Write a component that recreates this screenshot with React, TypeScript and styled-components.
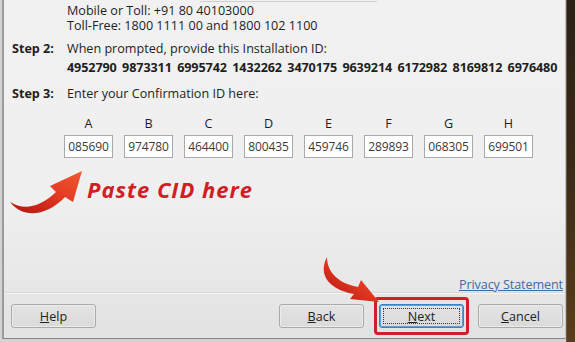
import * as React from "react";
import styled, { createGlobalStyle } from "styled-components";

const GlobalStyle = createGlobalStyle`
    html, body {
        margin: 0;
        padding: 0;
        background: #cfcfcf;
    }
    body {
        font-family: "Open Sans", "Noto Sans", sans-serif;
        font-size: 12.6px;
        color: #1e1e1e;
    }
`;

const Page = styled.div`
    display: flex;
    width: 575px;
    height: 342px;
    overflow: hidden;
    background: #d2d2d2;
`;

const Dialog = styled.div`
    position: relative;
    margin-left: 2px;
    width: 561px;
    height: 338px;
    border-left: 2px solid #9b9b9b;
    border-right: 1px solid #c4c4c4;
    border-bottom: 1px solid #858585;
    background: linear-gradient(180deg, #f1f1f1 0%, #efefef 60%, #e2e2e2 100%);
    display: flex;
    flex-direction: column;
`;

const RightEdge = styled.div`
    flex: 1;
    background: linear-gradient(180deg, #2b2016 0%, #3c2a18 50%, #5a3d1c 100%);
    border-left: 1px solid #6d5a44;
`;

const StubLine = styled.div`
    margin-left: 196px;
    width: 177px;
    height: 1px;
    border-bottom: 1px solid #cfcfcf;
`;

const Section = styled.div<{ $top: number }>`
    display: grid;
    grid-template-columns: 55px 1fr;
    padding-left: 8px;
    margin-top: ${({ $top }) => $top}px;
    line-height: 15px;
`;

const StepLabel = styled.div`
    font-weight: 700;
`;

const Text = styled.div<{ $bold?: boolean }>`
    font-weight: ${({ $bold }) => ($bold ? 700 : 400)};
    white-space: nowrap;
`;

const Numbers = styled(Text)`
    margin-top: 4px;
    word-spacing: 2.2px;
    letter-spacing: -0.1px;
`;

const CidGrid = styled.div`
    display: flex;
    gap: 11px;
    margin-top: 15px;
    padding-left: 60px;
`;

const CidColumn = styled.div`
    display: flex;
    flex-direction: column;
    align-items: center;
    width: 49px;
`;

const CidLetter = styled.div`
    line-height: 15px;
    margin-bottom: 4px;
`;

const CidBox = styled.div`
    box-sizing: border-box;
    width: 49px;
    height: 23px;
    border: 1px solid #a9a9a9;
    background: #ffffff;
    color: #3a3a3a;
    font-size: 12px;
    display: flex;
    align-items: center;
    justify-content: center;
    letter-spacing: -0.1px;
`;

const PasteRow = styled.div`
    display: flex;
    align-items: center;
    margin-top: 7px;
    padding-left: 2px;
`;

const PasteText = styled.div`
    font-size: 22px;
    font-weight: 700;
    font-style: italic;
    color: #d01e24;
    margin-left: 1px;
    margin-top: -4px;
    letter-spacing: 1px;
`;

const PrivacyRow = styled.div`
    margin-top: auto;
    display: flex;
    justify-content: flex-end;
    padding-right: 2px;
    line-height: 15px;
`;

const Link = styled.a`
    color: #3b6ca6;
    text-decoration: underline;
    letter-spacing: -0.1px;
    cursor: pointer;
`;

const Separator = styled.div`
    height: 1px;
    background: #d6d6d6;
    border-bottom: 1px solid #f6f6f6;
`;

const Footer = styled.div`
    display: flex;
    align-items: center;
    height: 44px;
    padding: 0 2px 0 7px;
`;

const Spacer = styled.div`
    flex: 1;
`;

const Button = styled.button<{ $focused?: boolean }>`
    box-sizing: border-box;
    width: 85px;
    height: 24px;
    padding: 0;
    font-family: inherit;
    font-size: 12.6px;
    color: #222;
    border-radius: 3px;
    border: 1px solid ${({ $focused }) => ($focused ? "#3b82c4" : "#aaaaaa")};
    background: linear-gradient(180deg, #e3e3e3 0%, #dadada 100%);
    box-shadow: ${({ $focused }) => ($focused ? "inset 0 0 0 1px #5aa0dc" : "inset 0 0 0 1px #ececec")};
    position: relative;
    cursor: pointer;

    u {
        text-decoration: underline;
    }
`;

const FocusRing = styled.span`
    position: absolute;
    inset: 3px;
    border: 1px dotted #3a3a3a;
`;

const Highlight = styled.div`
    box-sizing: border-box;
    margin: 0 9px 0 10px;
    padding: 4px 2px;
    border: 3px solid #cf2027;
    border-radius: 4px;
`;

const OverlayArrow = styled.svg`
    position: absolute;
    left: 308px;
    top: 252px;
    overflow: visible;
`;

const ArrowGradient = ({ id }: { id: string }) => (
    <defs>
        <linearGradient id={id} x1="0" y1="1" x2="1" y2="0">
            <stop offset="0%" stopColor="#b3120f" />
            <stop offset="55%" stopColor="#e33a22" />
            <stop offset="100%" stopColor="#f25a33" />
        </linearGradient>
    </defs>
);

const UpArrow = () => (
    <svg width="80" height="52" viewBox="0 0 80 52">
        <ArrowGradient id="g1" />
        <path
            d="M 4 37 C 18 46, 34 42, 50 27 L 44 21 L 76 6 L 67 37 L 59 32 C 42 50, 18 55, 4 37 Z"
            fill="url(#g1)"
        />
    </svg>
);

const DownArrow = () => (
    <OverlayArrow width="70" height="55" viewBox="0 0 70 55">
        <ArrowGradient id="g2" />
        <path
            d="M 15 5 C 15 22, 29 32, 46 35 L 49 28 L 67 50 L 38 47 L 42 42 C 19 38, 5 24, 15 5 Z"
            fill="url(#g2)"
        />
    </OverlayArrow>
);

const cid: [string, string][] = [
    ["A", "085690"],
    ["B", "974780"],
    ["C", "464400"],
    ["D", "800435"],
    ["E", "459746"],
    ["F", "289893"],
    ["G", "068305"],
    ["H", "699501"],
];

const installationId = "4952790 9873311 6995742 1432262 3470175 9639214 6172982 8169812 6976480";

export default function App() {
    return (
        <Page>
            <GlobalStyle />
            <Dialog>
                <StubLine />
                <Section $top={1}>
                    <span />
                    <div>
                        <Text>Mobile or Toll: +91 80 40103000</Text>
                        <Text>Toll-Free: 1800 1111 00 and 1800 102 1100</Text>
                    </div>
                </Section>
                <Section $top={8}>
                    <StepLabel>Step 2:</StepLabel>
                    <div>
                        <Text>When prompted, provide this Installation ID:</Text>
                        <Numbers $bold>{installationId}</Numbers>
                    </div>
                </Section>
                <Section $top={11}>
                    <StepLabel>Step 3:</StepLabel>
                    <Text>Enter your Confirmation ID here:</Text>
                </Section>
                <CidGrid>
                    {cid.map(([letter, value]) => (
                        <CidColumn key={letter}>
                            <CidLetter>{letter}</CidLetter>
                            <CidBox>{value}</CidBox>
                        </CidColumn>
                    ))}
                </CidGrid>
                <PasteRow>
                    <UpArrow />
                    <PasteText>Paste CID here</PasteText>
                </PasteRow>
                <PrivacyRow>
                    <Link>Privacy Statement</Link>
                </PrivacyRow>
                <Separator />
                <Footer>
                    <Button>
                        <u>H</u>elp
                    </Button>
                    <Spacer />
                    <Button>
                        <u>B</u>ack
                    </Button>
                    <Highlight>
                        <Button $focused>
                            <FocusRing />
                            <u>N</u>ext
                        </Button>
                    </Highlight>
                    <Button>
                        <u>C</u>ancel
                    </Button>
                </Footer>
                <DownArrow />
            </Dialog>
            <RightEdge />
        </Page>
    );
}
